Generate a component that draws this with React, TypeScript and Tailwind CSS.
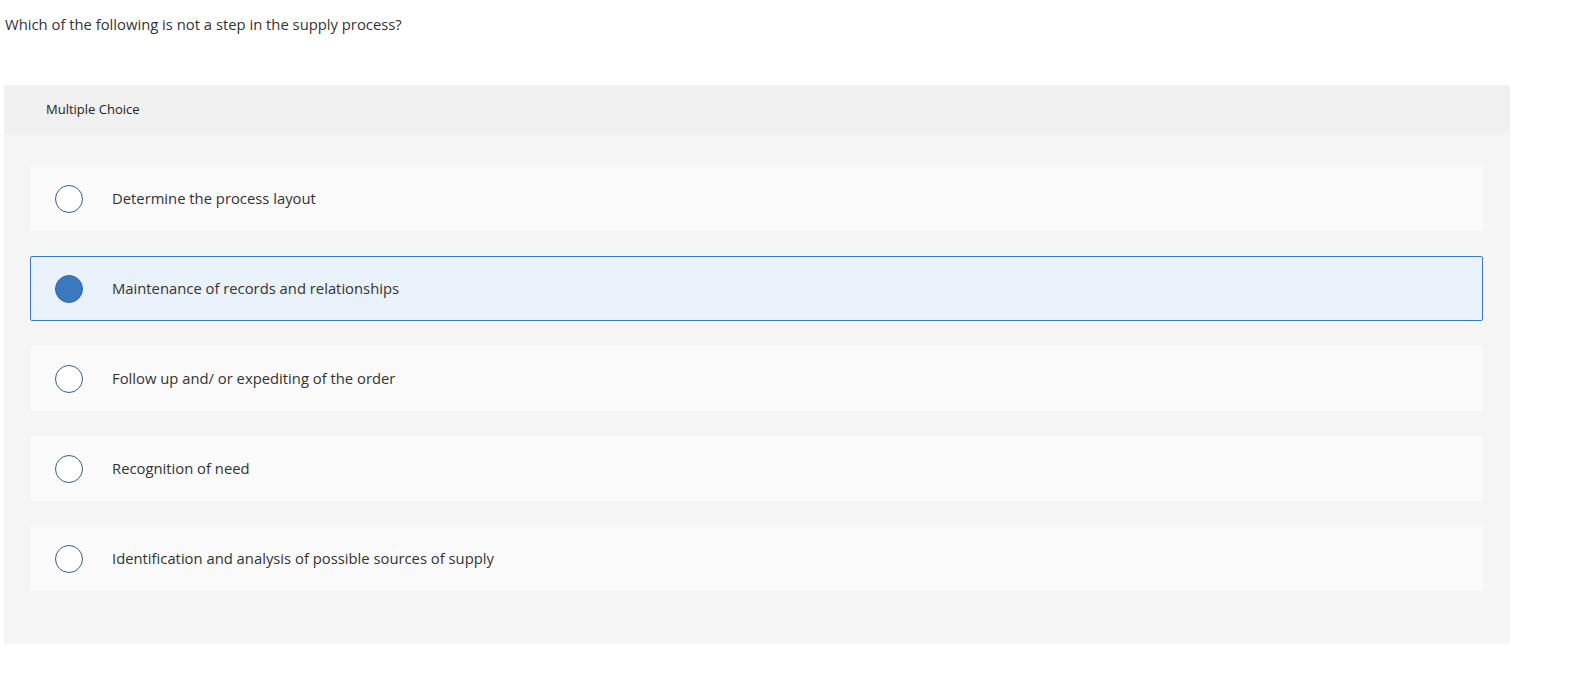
import React from 'react';

const options = [
  'Determine the process layout',
  'Maintenance of records and relationships',
  'Follow up and/ or expediting of the order',
  'Recognition of need',
  'Identification and analysis of possible sources of supply',
];

const selected = 1;

export default function App() {
  return (
    <div className="min-h-screen bg-white font-['Open_Sans',sans-serif] text-[#333]">
      <p className="pl-[5px] pt-[14px] text-[14.8px] leading-[20px]">
        Which of the following is not a step in the supply process?
      </p>

      <div className="ml-[4px] mt-[51px] w-[1506px] rounded-[3px] bg-[#f5f5f5] pb-[53px]">
        {/* Header */}
        <div className="flex h-[49px] items-center rounded-t-[3px] bg-[#f0f0f0] pl-[42px] text-[13px] text-[#222]">
          Multiple Choice
        </div>

        {/* Options */}
        <div className="flex flex-col gap-[25px] px-[26px] pt-[32px]">
          {options.map((opt, i) => {
            const on = i === selected;
            return (
              <div
                key={opt}
                className={`flex h-[65px] w-[1453px] items-center gap-[29px] rounded-[2px] border pl-[24px] ${
                  on ? 'border-[#3b78c4] bg-[#e9f1fa]' : 'border-transparent bg-[#fafafa]'
                }`}
              >
                <span
                  className={`block h-[28px] w-[28px] shrink-0 rounded-full border-[1.5px] ${
                    on ? 'border-[#2f67a8] bg-[#3c78bf]' : 'border-[#2f5f93] bg-white'
                  }`}
                />
                <span className="text-[14.8px] text-[#333]">{opt}</span>
              </div>
            );
          })}
        </div>
      </div>
    </div>
  );
}
